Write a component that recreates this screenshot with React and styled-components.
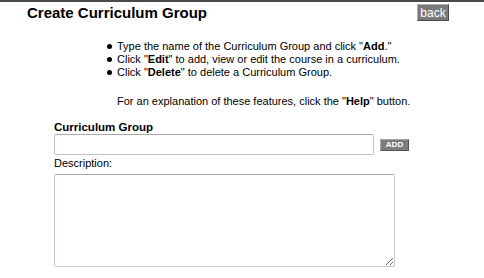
import React from 'react';
import styled, {createGlobalStyle} from 'styled-components';

const Global = createGlobalStyle`
  html, body {
    margin: 0;
    padding: 0;
    background: #fff;
    font-family: Arial, "Liberation Sans", sans-serif;
  }
`;
const Page = styled.div`
  width: 484px;
  height: 278px;
  border-top: 2px solid #4a4a4a;
  box-sizing: border-box;
  overflow: hidden;
`;
const Header = styled.div`
  display: flex;
  justify-content: space-between;
  align-items: flex-start;
  padding: 1px 35px 0 27px;
`;
const Title = styled.h1`
  margin: 0;
  font-size: 15px;
  font-weight: bold;
  color: #000;
  line-height: 20px;
`;
const BackButton = styled.button`
  margin-top: 1px;
  width: 32px;
  height: 17px;
  padding: 0;
  background: #7a7a7a;
  border: 1px solid #b0b0b0;
  border-right-color: #4a4a4a;
  border-bottom-color: #4a4a4a;
  color: #fff;
  font-family: Arial, "Liberation Sans", sans-serif;
  font-size: 12px;
  line-height: 14px;
`;
const Instructions = styled.ul`
  margin: 17px 0 0 0;
  padding-left: 117px;
  list-style: none;
  font-size: 11px;
  line-height: 13px;
  color: #000;
`;
const Item = styled.li`
  position: relative;
  margin: 0;
  &::before {
    content: '';
    position: absolute;
    left: -10px;
    top: 4px;
    width: 5px;
    height: 5px;
    border-radius: 50%;
    background: #000;
  }
`;
const Note = styled.p`
  margin: 16px 0 0 117px;
  font-size: 11px;
  line-height: 13px;
`;
const Form = styled.div`
  display: flex;
  flex-direction: column;
  padding: 12px 0 0 54px;
`;
const Label = styled.label`
  font-size: ${p => (p.bold ? '11.5px' : '11px')};
  line-height: 14px;
  font-weight: ${p => (p.bold ? 'bold' : 'normal')};
  color: #000;
`;
const Row = styled.div`
  display: flex;
  align-items: center;
  gap: 6px;
  margin: 0 0 1px;
`;
const TextInput = styled.input`
  width: 320px;
  height: 21px;
  box-sizing: border-box;
  border: 1px solid #bfc3c9;
  border-top-color: #a9a9a9;
  border-radius: 2px;
  margin: 0;
`;
const SmallButton = styled.button`
  width: 29px;
  height: 12px;
  padding: 0;
  margin-top: 1px;
  background: #7d7d7d;
  border: 1px solid #a6a6a6;
  border-right-color: #555;
  border-bottom-color: #555;
  color: #fff;
  font-family: Arial, "Liberation Sans", sans-serif;
  font-size: 8px;
  font-weight: bold;
  line-height: 10px;
`;
const TextArea = styled.textarea`
  margin-top: 4px;
  width: 341px;
  height: 93px;
  box-sizing: border-box;
  border: 1px solid #c6cbd3;
  border-top-color: #a9a9a9;
  border-radius: 2px;
  resize: both;
`;

export default function App() {
  return (
    <Page>
      <Global />
      <Header>
        <Title>Create Curriculum Group</Title>
        <BackButton>back</BackButton>
      </Header>
      <Instructions>
        <Item>Type the name of the Curriculum Group and click "<b>Add</b>."</Item>
        <Item>Click "<b>Edit</b>" to add, view or edit the course in a curriculum.</Item>
        <Item>Click "<b>Delete</b>" to delete a Curriculum Group.</Item>
      </Instructions>
      <Note>For an explanation of these features, click the "<b>Help</b>" button.</Note>
      <Form>
        <Label bold>Curriculum Group</Label>
        <Row>
          <TextInput type="text" />
          <SmallButton>ADD</SmallButton>
        </Row>
        <Label>Description:</Label>
        <TextArea />
      </Form>
    </Page>
  );
}
